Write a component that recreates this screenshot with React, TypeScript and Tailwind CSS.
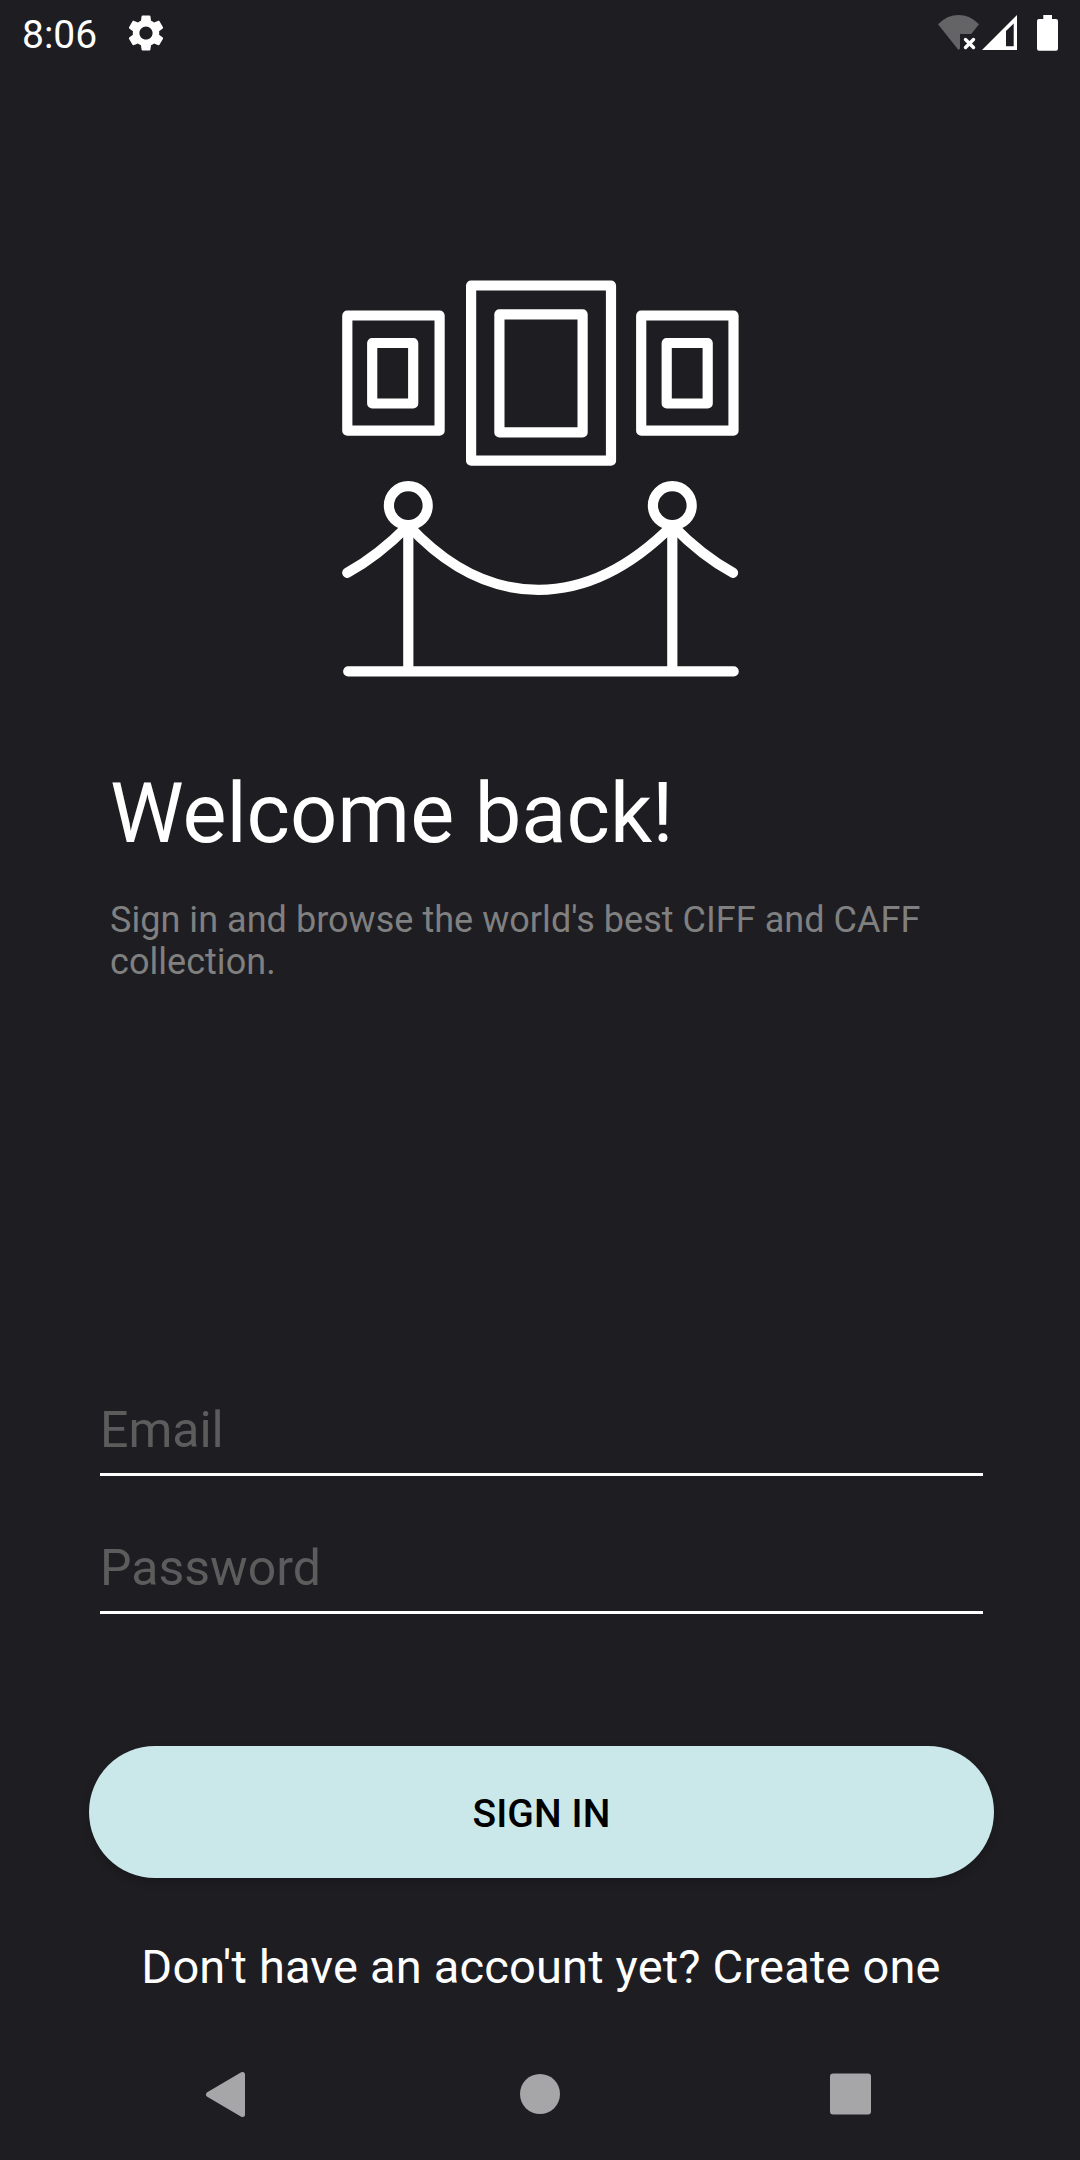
import React from 'react';

function GearIcon() {
  return (
    <svg className="ml-[27px] size-[44px]" viewBox="0 0 24 24" fill="#ffffff">
      <path d="M19.14 12.94c.04-.3.06-.61.06-.94 0-.32-.02-.64-.07-.94l2.03-1.58c.18-.14.23-.41.12-.61l-1.92-3.32c-.12-.22-.37-.29-.59-.22l-2.39.96c-.5-.38-1.03-.7-1.62-.94l-.36-2.54c-.04-.24-.24-.41-.48-.41h-3.84c-.24 0-.43.17-.47.41l-.36 2.54c-.59.24-1.13.57-1.62.94l-2.39-.96c-.22-.08-.47 0-.59.22L2.74 8.87c-.12.21-.08.47.12.61l2.03 1.58c-.05.3-.09.63-.09.94s.02.64.07.94l-2.03 1.58c-.18.14-.23.41-.12.61l1.92 3.32c.12.22.37.29.59.22l2.39-.96c.5.38 1.03.7 1.62.94l.36 2.54c.05.24.24.41.48.41h3.84c.24 0 .44-.17.47-.41l.36-2.54c.59-.24 1.13-.56 1.62-.94l2.39.96c.22.08.47 0 .59-.22l1.92-3.32c.12-.22.07-.47-.12-.61l-2.01-1.58zM12 15.6c-1.98 0-3.6-1.62-3.6-3.6s1.62-3.6 3.6-3.6 3.6 1.62 3.6 3.6-1.62 3.6-3.6 3.6z" />
    </svg>
  );
}

function StatusIcons() {
  return (
    <svg className="ml-auto h-[80px] w-[160px]" viewBox="0 0 160 80">
      <path d="M18 24.3Q27 15 38.500 15Q50 15 59 24.300L51.300 34H40V48.500L38.500 50Z" fill="#646466" />
      <path d="M45.500 39.500L53.500 47.500M53.500 39.500L45.500 47.500" stroke="#fff" strokeWidth="3.400" strokeLinecap="round" />
      <path fillRule="evenodd" d="M62 50L97 15V50ZM86 31V46.300H93.700V23.500Z" fill="#fff" />
      <path d="M123.300 15H132V19H136Q138 19 138 21V48.500Q138 50.700 136 50.700H119Q117 50.700 117 48.500V21Q117 19 119 19H123.300Z" fill="#fff" />
    </svg>
  );
}

function GalleryLogo() {
  return (
    <svg
      className="mx-auto block h-[400px] w-[400px] shrink-0"
      viewBox="340 279 400 400"
      fill="none"
      stroke="#fff"
      strokeWidth="10.2"
      strokeLinejoin="round"
      strokeLinecap="round"
    >
      <rect x="347.300" y="315.500" width="92.300" height="115.200" />
      <rect x="372.200" y="343" width="41" height="60.500" />
      <rect x="471.100" y="285.500" width="139.900" height="175.200" />
      <rect x="499.400" y="314.300" width="83.200" height="118.100" />
      <rect x="641.200" y="315.500" width="92.300" height="115.200" />
      <rect x="666.700" y="343" width="41" height="60.500" />
      <circle cx="408.300" cy="505.600" r="19.400" />
      <circle cx="672.300" cy="505.600" r="19.400" />
      <path d="M408.300 528V671M672.300 528V671M348.200 671.400H733.700" />
      <path d="M347.300 572.800Q378 556 408.300 525.400Q468 589.800 538.500 589.800Q608 589.800 672.300 525.400Q702 556 733 572.800" />
    </svg>
  );
}

function Field({ label, type }: { label: string; type: string }) {
  return (
    <input
      type={type}
      placeholder={label}
      className="block h-[96px] w-[883px] border-b-[3px] border-white bg-transparent pt-[7px] text-[50px] text-white outline-none placeholder:text-[#5c5c5c] placeholder:opacity-100"
    />
  );
}

export default function App() {
  return (
    <div className="flex h-[2160px] w-[1080px] flex-col overflow-hidden bg-[#1e1d22] font-[Roboto,sans-serif] text-white">
      <header className="flex h-[80px] shrink-0 items-start pl-[22px]">
        <span className="mt-[13px] text-[39px] leading-[45px]">8:06</span>
        <div className="mt-[11px]"><GearIcon /></div>
        <StatusIcons />
      </header>

      <main className="flex grow flex-col pt-[199px]">
        <GalleryLogo />
        <h1 className="mt-[86px] ml-[110px] text-[83px] leading-[97px] whitespace-nowrap">Welcome back!</h1>
        <p className="mt-[37px] ml-[110px] w-[860px] text-[36px] leading-[42px] tracking-[0.04px] text-[#808080]">
          Sign in and browse the world's best CIFF and CAFF collection.
        </p>

        <form className="mt-[397px] flex flex-col pl-[100px]">
          <Field label="Email" type="email" />
          <div className="mt-[42px]">
            <Field label="Password" type="password" />
          </div>
        </form>

        <button className="mt-[132px] ml-[89px] h-[132px] w-[905px] shrink-0 rounded-full bg-[#cae8ea] pt-[4px] text-[39px] font-medium tracking-[0.1px] text-black shadow-[0_4px_8px_rgba(0,0,0,0.2)]">
          SIGN IN
        </button>
        <p className="mt-[61px] pl-[2px] text-center text-[47px] leading-[55px] tracking-[0.18px] whitespace-nowrap">
          Don't have an account yet? Create one
        </p>
      </main>

      <nav className="flex h-[132px] shrink-0 items-center">
        <svg className="h-[132px] w-[1080px]" viewBox="0 2028 1080 132" fill="#a6a6a8">
          <path d="M208.500 2094.500L242.500 2074.500V2114.500Z" stroke="#a6a6a8" strokeWidth="5" strokeLinejoin="round" />
          <circle cx="540" cy="2094" r="20" />
          <rect x="830" y="2073.500" width="41" height="41" rx="3" />
        </svg>
      </nav>
    </div>
  );
}
